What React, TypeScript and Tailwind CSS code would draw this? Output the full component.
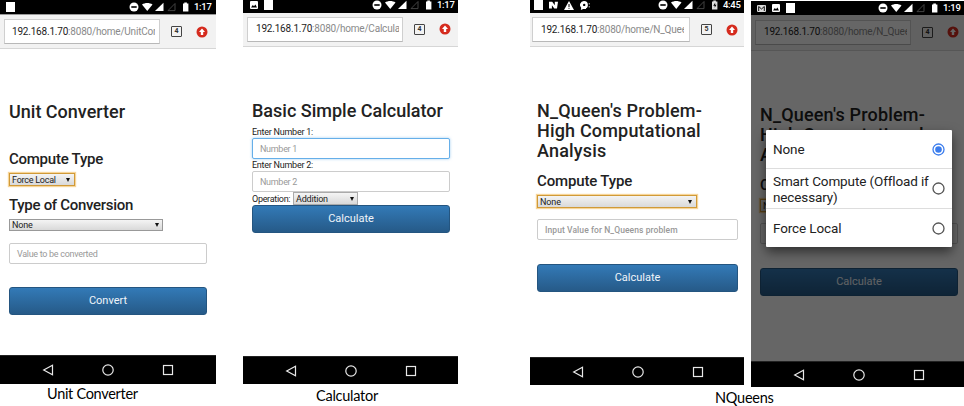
import type { ReactNode } from 'react';

type Notice = 'square' | 'image' | 'gmail' | 'nougat' | 'warning' | 'head';

function NoticeIcon({ kind }: { kind: Notice }) {
  switch (kind) {
    case 'square':
      return <div className="h-[10px] w-[9px] bg-white" />;
    case 'image':
      return (
        <svg className="h-2 w-2" viewBox="0 0 8 8">
          <rect width="8" height="8" rx="1" fill="#fff" />
          <path d="M1 6.5 2.8 4l1.2 1.3L5.4 3.4 7 6.5z" fill="#000" />
        </svg>
      );
    case 'gmail':
      return (
        <svg className="h-[7px] w-[9px]" viewBox="0 0 9 7">
          <rect width="9" height="7" rx="1" fill="#ddd" />
          <path d="M1.7 6V1.5L4.5 4l2.8-2.5V6" fill="none" stroke="#111" strokeWidth="1" />
        </svg>
      );
    case 'nougat':
      return (
        <svg className="h-2 w-[9px]" viewBox="0 0 9 8">
          <path d="M0 7.5V.8h3.2l2.6 3.4V.8H9l-1 6.7H5.3L2.9 4.2v3.3z" fill="#fff" />
        </svg>
      );
    case 'warning':
      return (
        <svg className="h-[9px] w-[10px]" viewBox="0 0 10 9">
          <path d="M5 0 10 9H0z" fill="#fff" />
          <path d="M5 3v3M5 6.8v1" stroke="#000" strokeWidth="1" />
        </svg>
      );
    case 'head':
      return (
        <svg className="h-[9px] w-[10px]" viewBox="0 0 10 9">
          <path d="M4 0a3.9 3.9 0 0 1 3.9 3.9C7.9 5.600 7 6.800 6 7.300V8H3.200L.8 9 1.200 6.700A3.900 3.900 0 0 1 4 0z" fill="#fff" />
          <circle cx="4.2" cy="3.9" r="1.2" fill="#000" />
          <path d="M9.3 2v1.4M9.3 5v1.4" stroke="#999" strokeWidth="1.2" />
        </svg>
      );
  }
}

function StatusIcons({ charging }: { charging?: boolean }) {
  return (
    <svg className="h-[10px] w-[60px] shrink-0" viewBox="0 0 60 10">
      <circle cx="5" cy="5" r="4.5" fill="#fff" />
      <rect x="2.3" y="4.2" width="5.4" height="1.6" fill="#000" />
      <path d="M13 2.6C16 .6 20.500 .6 23.500 2.600L18.250 9z" fill="#fff" />
      <path d="M34.500 .8V9H26z" fill="#fff" />
      <path d="M46 1.500V8.600H39z" fill="none" stroke="#4a4a4a" strokeWidth=".9" />
      <path d="M54 1.600h1.300V.6h2.600v1H59.400V9.400H54z" fill={charging ? '#ddd' : '#fff'} />
      {charging && <path d="M57.200 2.800 55.200 5.700h1.500v2l1.800-3h-1.400z" fill="#000" />}
    </svg>
  );
}

function StatusBar({ notices, time, className }: { notices: Notice[]; time: string; className: string }) {
  return (
    <div className={`flex shrink-0 items-center bg-black ${className}`}>
      <div className="flex flex-1 items-center gap-[6px]">
        {notices.map((n) => (
          <NoticeIcon key={n} kind={n} />
        ))}
      </div>
      <StatusIcons charging={time === '4:45'} />
      <span className="ml-[5px] w-[21px] text-[9.500px] leading-[10px] font-medium tracking-[-0.3px] text-white">{time}</span>
    </div>
  );
}

function Toolbar({ path, tabs, className, boxClass }: { path: string; tabs: number; className: string; boxClass: string }) {
  return (
    <div className={`flex shrink-0 items-center border-b border-[#d6d6d6] bg-[#f2f2f2] ${className}`}>
      <div className={`flex h-[25px] shrink-0 items-center border border-[#cfcfcf] border-b-[#b8b8b8] bg-white ${boxClass}`}>
        <div className="w-[143px] overflow-hidden text-[10px] leading-[14px] tracking-[-0.2px] whitespace-nowrap text-[#8a8a8a]">
          <span className="text-[#1c1c1c]">192.168.1.70</span>
          {path}
        </div>
      </div>
      <div className="flex flex-1 items-center">
        <div className="ml-[11px] flex h-[11px] w-[11px] items-center justify-center rounded-[1px] border border-[#444] text-[7px] leading-none font-bold text-[#333]">
          {tabs}
        </div>
        <svg className="ml-[14px] h-3 w-3" viewBox="0 0 12 12">
          <circle cx="6" cy="6" r="5.500" fill="#d52b1e" />
          <path d="M6 2.600 9 5.900H7.200V9H4.800V5.900H3z" fill="#fff" />
        </svg>
      </div>
    </div>
  );
}

function NavBar({ className }: { className: string }) {
  return (
    <div className={`flex shrink-0 items-center border-t border-[#222] bg-black ${className}`}>
      <svg className="h-3 w-[132px]" viewBox="0 0 132 12" fill="none" stroke="#e8e8e8" strokeWidth="1.200">
        <path d="M10.500 1.200V10.800L1.700 6z" />
        <circle cx="66" cy="6" r="5.200" />
        <rect x="121.500" y="1.500" width="9" height="9" />
      </svg>
    </div>
  );
}

function Select({ label, className }: { label: string; className: string }) {
  return (
    <div
      className={`flex items-center justify-between border bg-gradient-to-b from-[#f4f4f4] to-[#d9d9d9] text-[9px] leading-[10px] text-[#222] ${className}`}
    >
      <span>{label}</span>
      <svg className="h-1 w-1" viewBox="0 0 4 4">
        <path d="M0 0h4L2 4z" fill="#111" />
      </svg>
    </div>
  );
}

function Field({ hint, className }: { hint: string; className: string }) {
  return (
    <div className={`flex items-center rounded-[2px] border bg-white px-[7px] leading-[12px] text-[#999] ${className}`}>
      {hint}
    </div>
  );
}

function Button({ label, className }: { label: string; className: string }) {
  return (
    <div
      className={`flex h-7 items-center justify-center rounded-[3px] border border-[#245580] bg-gradient-to-b from-[#337ab7] to-[#265a88] leading-[14px] text-[#f0f5fa] ${className}`}
    >
      {label}
    </div>
  );
}

function Radio({ checked }: { checked?: boolean }) {
  return (
    <svg className="h-[13px] w-[13px] shrink-0" viewBox="0 0 13 13" fill="none">
      <circle cx="6.500" cy="6.500" r="5.500" stroke={checked ? '#3b7ded' : '#555'} strokeWidth="1.300" />
      {checked && <circle cx="6.500" cy="6.500" r="3.300" fill="#3b7ded" />}
    </svg>
  );
}

function Option({ children, checked, className }: { children: ReactNode; checked?: boolean; className: string }) {
  return (
    <div className={`flex items-center justify-between pr-[7px] pl-[7px] ${className}`}>
      <span className="whitespace-nowrap">{children}</span>
      <Radio checked={checked} />
    </div>
  );
}

function QueensForm({ first }: { first?: boolean }) {
  return (
    <>
      <h1 className="text-[18px] leading-5 font-medium tracking-[0.18px] whitespace-nowrap">
        N_Queen's Problem-
        <br />
        High Computational
        <br />
        Analysis
      </h1>
      <h2 className="mt-[11px] text-[15px] leading-[18px] font-medium tracking-[-0.15px]">Compute Type</h2>
      <Select label="None" className="mt-[5px] h-[13px] w-[160px] border-[#d09a38] pr-1 pl-[2px] tracking-[-0.1px] shadow-[0_0_1px_1px_#f0b04088]" />
      <Field
        hint="Input Value for N_Queens problem"
        className={`mt-[11px] h-[21px] border-[#ccc] text-[8.500px] font-medium tracking-[0.08px] ${first ? 'w-[201px]' : 'w-[198px]'}`}
      />
      <Button label="Calculate" className={`mt-6 text-[11px] ${first ? 'w-[201px]' : 'w-[198px]'}`} />
    </>
  );
}

export default function App() {
  return (
    <main className="flex h-[406px] w-[964px] overflow-hidden bg-white font-[Roboto,sans-serif] text-[#222]">
      <section className="flex w-[216px] shrink-0 flex-col">
        <StatusBar notices={['square']} time="1:17" className="h-[14px] pr-px pl-[6px]" />
        <Toolbar path=":8080/home/UnitConverter" tabs={4} className="h-[35px] border-t border-t-[#999] pl-1" boxClass="w-[156px] pl-[7px]" />
        <div className="flex h-[306px] flex-col pt-[53px] pl-[9px]">
          <h1 className="text-[18px] leading-5 font-medium">Unit Converter</h1>
          <h2 className="mt-[28px] text-[15px] leading-[18px] font-medium tracking-[-0.25px]">Compute Type</h2>
          <Select label="Force Local" className="mt-[5px] h-[13px] w-[66px] border-[#d09a38] pr-1 pl-[2px] tracking-[-0.25px] shadow-[0_0_1px_1px_#f0b04088]" />
          <h2 className="mt-[10px] text-[15px] leading-[18px] font-medium tracking-[-0.3px]">Type of Conversion</h2>
          <Select label="None" className="mt-[5px] h-3 w-[154px] border-[#999] pr-[3px] pl-[2px] tracking-[-0.2px]" />
          <Field hint="Value to be converted" className="mt-3 h-[21px] w-[198px] border-[#ccc] text-[9px] tracking-[-0.3px]" />
          <Button label="Convert" className="mt-[23px] w-[198px] text-[11px]" />
        </div>
        <NavBar className="h-[29px] pl-[42px]" />
        <p className="pl-[47px] font-[Lato,sans-serif] text-[14.500px] leading-[20px] tracking-[-0.3px] text-black">Unit Converter</p>
      </section>

      <section className="ml-[27px] flex w-[215px] shrink-0 flex-col">
        <StatusBar notices={['image', 'square']} time="1:17" className="h-[13px] pb-[3px] pl-[7px]" />
        <Toolbar path=":8080/home/Calculator" tabs={4} className="h-[34px] pb-px pl-1" boxClass="w-[156px] pl-[8px]" />
        <div className="flex h-[309px] flex-col pt-[54px] pl-[9px]">
          <h1 className="text-[18px] leading-5 font-medium whitespace-nowrap">Basic Simple Calculator</h1>
          <label className="mt-[5px] text-[9px] leading-[12px] tracking-[-0.25px]">Enter Number 1:</label>
          <Field hint="Number 1" className="h-[21px] w-[198px] border-[#66afe9] text-[9px] tracking-[-0.3px] shadow-[0_0_3px_#66afe999]" />
          <label className="text-[9px] leading-[12px] tracking-[-0.25px]">Enter Number 2:</label>
          <Field hint="Number 2" className="h-[21px] w-[198px] border-[#ccc] text-[9px] tracking-[-0.3px]" />
          <div className="flex h-[13px] items-center gap-[3px] text-[9px] leading-[12px]">
            <span className="w-[38px] tracking-[-0.3px]">Operation:</span>
            <Select label="Addition" className="h-[13px] w-[65px] border-[#aaa] pr-[3px] pl-[2px] tracking-[-0.2px]" />
          </div>
          <Button label="Calculate" className="w-[198px] text-[11px]" />
        </div>
        <NavBar className="h-7 pl-[42px]" />
        <p className="mt-[2px] pl-[73px] font-[Lato,sans-serif] text-[14.500px] leading-[20px] tracking-[-0.25px] text-black">Calculator</p>
      </section>

      <div className="ml-[72px] flex w-[434px] shrink-0 flex-col">
        <div className="flex h-[387px] gap-[7px]">
          <section className="flex w-[214px] shrink-0 flex-col">
            <StatusBar notices={['square', 'nougat', 'warning', 'head']} time="4:45" className="h-[13px] pb-[3px] pl-1" />
            <Toolbar path=":8080/home/N_Queens" tabs={5} className="h-[34px] pl-[2px]" boxClass="w-[158px] pl-[8px]" />
            <div className="flex h-[310px] flex-col pt-[54px] pl-[7px]">
              <QueensForm first />
            </div>
            <NavBar className="h-7 pl-[42px]" />
          </section>

          <section className="relative flex w-[213px] shrink-0 flex-col pt-px">
            <StatusBar notices={['gmail', 'image', 'square']} time="1:19" className="h-[14px] pl-[6px]" />
            <Toolbar path=":8080/home/N_Queens" tabs={4} className="h-[36px] pb-px pl-1" boxClass="w-[156px] pl-[8px]" />
            <div className="flex h-[310px] flex-col pt-[54px] pl-[9px]">
              <QueensForm />
            </div>
            <NavBar className="h-[26px] pl-[42px]" />
            <div className="absolute top-[15px] right-0 bottom-[26px] left-0 bg-black/60" />
            <div className="absolute top-[130px] left-[15px] h-[117px] w-[186px] rounded-[1px] bg-white text-[13.500px] leading-4 tracking-[-0.12px] text-[#222] shadow-[0_5px_12px_#0008]">
              <Option checked className="h-[39px] border-b border-[#ddd]">None</Option>
              <Option className="h-10 border-b border-[#ddd]">
                Smart Compute (Offload if
                <br />
                necessary)
              </Option>
              <Option className="h-[38px]">Force Local</Option>
            </div>
          </section>
        </div>
        <p className="mt-px pl-[185px] font-[Lato,sans-serif] text-[14.500px] leading-[20px] tracking-[-0.25px] text-black">NQueens</p>
      </div>
    </main>
  );
}
